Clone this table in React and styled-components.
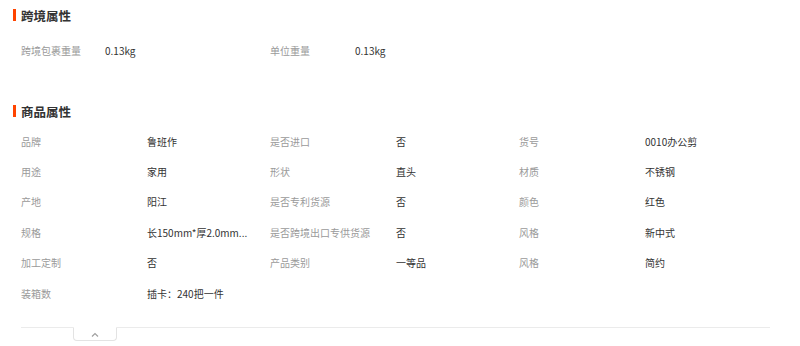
import styled, { createGlobalStyle } from "styled-components";

const GlobalStyle = createGlobalStyle`
  body {
    margin: 0;
    background: #fff;
    font-family: "Noto Sans CJK SC", "Liberation Sans", sans-serif;
  }
`;

const Page = styled.div`
  width: 800px;
  height: 346px;
  padding: 0 13px;
  box-sizing: border-box;
  overflow: hidden;
`;

const Heading = styled.div`
  display: flex;
  align-items: center;
  height: 30px;
  margin-top: ${(p) => p.$top || 0}px;
  font-size: 12.5px;
  font-weight: bold;
  color: #333;

  &::before {
    content: "";
    width: 3px;
    height: 12px;
    background: #ff4400;
    margin-right: 5px;
  }
`;

const Table = styled.div`
  display: grid;
  grid-template-columns: ${(p) => p.$cols};
  grid-auto-rows: ${(p) => p.$row}px;
  align-items: center;
  padding-left: 8px;
  margin-top: ${(p) => p.$top || 0}px;
  font-size: 10px;
`;

const Label = styled.div`
  color: #9a9a9a;
  white-space: nowrap;
`;

const Value = styled.div`
  color: #333;
  white-space: nowrap;
`;

const Footer = styled.div`
  box-sizing: border-box;
  margin: 19px 0 0 8px;
  width: 749px;
  border-top: 1px solid #ebebeb;
  padding-left: 52px;
`;

const Tab = styled.button`
  display: flex;
  justify-content: center;
  align-items: center;
  width: 44px;
  height: 14px;
  padding: 0;
  margin-top: -1px;
  background: #fff;
  border: 1px solid #e3e3e3;
  border-top-color: #fff;
  border-radius: 0 0 4px 4px;
  cursor: pointer;
`;

const cross = [
  ["跨境包裹重量", "0.13kg"],
  ["单位重量", "0.13kg"],
];

const attrs = [
  ["品牌", "鲁班作"], ["是否进口", "否"], ["货号", "0010办公剪"],
  ["用途", "家用"], ["形状", "直头"], ["材质", "不锈钢"],
  ["产地", "阳江"], ["是否专利货源", "否"], ["颜色", "红色"],
  ["规格", "长150mm*厚2.0mm..."], ["是否跨境出口专供货源", "否"], ["风格", "新中式"],
  ["加工定制", "否"], ["产品类别", "一等品"], ["风格", "简约"],
  ["装箱数", "插卡：240把一件"],
];

const Pair = ({ label, value }) => (
  <>
    <Label>{label}</Label>
    <Value>{value}</Value>
  </>
);

export default function App() {
  return (
    <Page>
      <GlobalStyle />
      <Heading>跨境属性</Heading>
      <Table $cols="84px 165px 85px 1fr" $row={30} $top={5}>
        {cross.map(([l, v]) => (
          <Pair key={l} label={l} value={v} />
        ))}
      </Table>
      <Heading $top={31}>商品属性</Heading>
      <Table $cols="126px 123px 126px 123px 126px 123px" $row={30.4}>
        {attrs.map(([l, v], i) => (
          <Pair key={i} label={l} value={v} />
        ))}
      </Table>
      <Footer>
        <Tab aria-label="收起">
          <svg width="8" height="5" viewBox="0 0 8 5">
            <path d="M1 4.5 L4 1.5 L7 4.5" fill="none" stroke="#a0a0a0" strokeWidth="1.2" />
          </svg>
        </Tab>
      </Footer>
    </Page>
  );
}
